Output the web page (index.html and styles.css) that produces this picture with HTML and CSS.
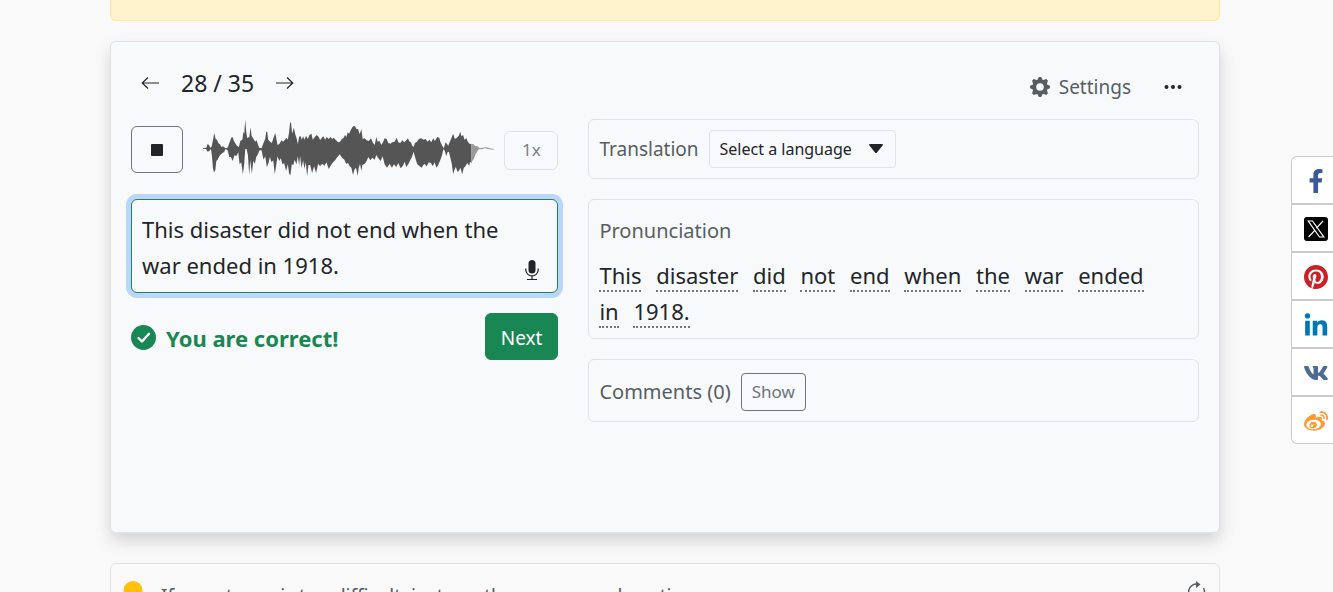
FILE: index.html
```html
<!DOCTYPE html>
<html lang="en">
<head>
<meta charset="utf-8">
<title>Dictation exercise</title>
<link rel="stylesheet" href="styles.css">
</head>
<body>
<main class="page">
  <div class="notice"></div>

  <section class="card">
    <header class="card-head">
      <nav class="pager">
        <button class="plain" type="button" aria-label="Previous"><svg class="arrow" viewBox="0 0 18 14"><path d="M7 1.500 1.200 7 7 12.500M1.500 7H18"/></svg></button>
        <span class="count">28 / 35</span>
        <button class="plain" type="button" aria-label="Following"><svg class="arrow" viewBox="0 0 18 14"><path d="M11 1.500 16.800 7 11 12.500M16.500 7H0"/></svg></button>
      </nav>
      <div class="tools">
        <button class="plain settings" type="button">
          <svg class="gear" viewBox="0 0 20 20"><path fill-rule="evenodd" d="M8.800 0h2.400l1.100 2.600 1.300.5L16.200 2 18 3.800l-1.100 2.600.5 1.300L20 8.800v2.400l-2.600 1.100-.5 1.300L18 16.200 16.200 18l-2.600-1.100-1.300.5L11.200 20H8.800l-1.100-2.600-1.300-.5L3.800 18 2 16.200l1.100-2.600-.5-1.300L0 11.200V8.800l2.600-1.100.5-1.300L2 3.800 3.800 2l2.600 1.100 1.300-.5zM10 6.200a3.800 3.800 0 1 0 0 7.600 3.800 3.800 0 0 0 0-7.600z"/></svg>
          Settings
        </button>
        <button class="plain" type="button" aria-label="More"><svg class="dots" viewBox="0 0 18 6"><circle cx="2.500" cy="3" r="2"/><circle cx="9" cy="3" r="2"/><circle cx="15.500" cy="3" r="2"/></svg></button>
      </div>
    </header>

    <div class="columns">
      <div class="stack">
        <div class="audio">
          <button class="stop" type="button" aria-label="Stop"><span class="stop-mark"></span></button>
          <svg class="wave" viewBox="0 0 930 210" preserveAspectRatio="none">
            <path class="played" d="M24 99 L34 98 38 87 42 90 46 98 50 95 54 75 58 54 62 72 66 74 70 84 75 88 79 96 84 94 92 100 98 98 104 82 109 68 113 66 117 78 122 86 126 92 132 96 136 78 140 76 143 72 145 50 148 56 151 14 154 50 157 70 160 66 163 68 167 37 170 62 176 72 181 80 185 76 189 88 193 98 200 100 205 86 211 72 214 50 217 50 220 74 226 80 231 84 236 68 241 54 244 68 248 90 254 86 260 76 265 80 270 74 275 68 279 74 283 50 286 20 289 26 292 56 297 38 302 60 306 72 309 88 313 66 317 62 321 74 325 64 329 74 334 62 339 72 344 60 350 56 354 74 360 66 366 60 372 66 376 76 381 68 386 64 391 74 396 66 402 72 407 66 412 72 417 68 424 76 430 82 436 80 441 72 446 70 451 60 455 66 459 52 463 56 468 46 472 38 477 33 481 34 485 42 490 42 495 58 500 42 504 72 510 70 516 76 522 78 529 70 535 84 540 90 545 66 549 80 555 78 560 90 565 82 570 70 576 72 581 84 587 86 593 82 600 80 606 68 611 82 617 84 623 76 629 82 635 76 640 70 645 80 649 82 653 92 657 96 661 84 667 80 673 72 680 70 687 74 693 72 699 80 705 74 710 82 716 70 721 78 728 66 734 68 738 82 743 92 748 100 753 82 757 86 761 92 767 78 772 66 776 56 781 72 787 68 793 62 797 50 801 64 806 60 810 74 816 70 820 80 825 86 831 88 L831 144 827 140 824 152 818 144 813 154 808 158 803 178 798 158 793 168 789 170 784 156 780 164 776 178 772 148 767 126 763 110 759 112 755 124 751 108 747 102 742 122 737 136 731 150 726 158 720 142 715 154 709 144 703 142 696 154 689 146 681 158 674 152 668 148 662 128 657 110 652 126 647 136 641 148 635 156 630 140 625 152 618 160 611 144 605 156 598 148 592 158 585 146 577 158 570 148 564 124 558 138 551 130 545 120 540 134 533 128 527 136 521 126 514 142 508 148 503 150 500 168 496 146 492 160 489 182 484 158 479 164 475 180 470 158 465 154 460 144 454 146 449 134 442 128 435 118 428 126 421 136 415 142 409 150 402 162 395 142 389 152 382 146 376 154 370 146 364 174 358 154 352 174 346 150 341 150 337 184 333 142 329 162 325 136 320 160 316 122 313 152 309 124 305 148 299 134 296 150 291 148 287 180 283 176 279 148 274 168 268 144 263 148 258 130 253 138 248 124 243 158 240 178 235 136 230 142 225 126 221 144 216 156 211 124 206 134 200 106 194 106 189 118 184 126 180 146 175 138 171 176 166 136 163 180 159 120 155 102 151 102 148 146 144 178 139 142 134 148 130 112 124 124 119 120 113 138 108 126 103 126 98 106 92 102 88 110 83 114 78 118 73 124 68 134 64 138 61 166 57 172 54 160 51 124 48 102 43 108 38 110 33 102 24 101Z"/>
            <path class="rest" d="M831 86 L837 88 842 94 848 93 856 100 864 98 876 97 886 100 898 102 898 104 884 103 872 100 862 103 853 103 848 110 843 118 838 132 831 142Z"/>
          </svg>
          <button class="speed" type="button">1x</button>
        </div>

        <div class="answer">
          <textarea class="answer-box" aria-label="Your answer" rows="2" spellcheck="false">This disaster did not end when the war ended in 1918.</textarea>
          <button class="plain mic" type="button" aria-label="Speak"><svg class="mic-icon" viewBox="0 0 14 20"><rect class="solid" x="3.500" y="0" width="7" height="13.500" rx="3.500"/><path d="M.8 8.500v1.500a6.200 5.800 0 0 0 12.400 0V8.500M7 16v3.500M2 19.500h10"/></svg></button>
        </div>

        <div class="result">
          <p class="verdict"><svg class="check" viewBox="0 0 25 25"><circle cx="12.500" cy="12.500" r="12.500"/><path d="M7.500 13 11 16.500 18 8.800"/></svg>You are correct!</p>
          <button class="next" type="button">Next</button>
        </div>
      </div>

      <div class="stack">
        <div class="panel row">
          <label for="lang">Translation</label>
          <span class="select-wrap">
            <select class="select" id="lang"><option>Select a language</option></select>
            <svg class="caret" viewBox="0 0 14 9"><path d="M1 0h12q1.500.4.6 1.500L8 8.400q-1 1-2 0L.4 1.500Q-.5.4 1 0z"/></svg>
          </span>
        </div>
        <div class="panel pron">
          <h2 class="title">Pronunciation</h2>
          <p class="words"><span>This</span> <span>disaster</span> <span>did</span> <span>not</span> <span>end</span> <span>when</span> <span>the</span> <span>war</span> <span>ended</span> <span>in</span> <span>1918.</span></p>
        </div>
        <div class="panel row comments">
          <h2 class="title">Comments (0)</h2>
          <button class="show" type="button">Show</button>
        </div>
      </div>
    </div>
  </section>

  <section class="hint">
    <svg class="bulb" viewBox="0 0 20 30"><path d="M10 0a9.500 9.500 0 0 1 9.500 9.500c0 5-3.500 6-4.500 11.500H5C4 15.500.5 14.500.5 9.500A9.500 9.500 0 0 1 10 0zM6 23h8v4H6z"/></svg>
    <p class="hint-text">If a sentence is too difficult, just see the answer and continue.</p>
    <button class="plain" type="button" aria-label="Refresh"><svg class="refresh" viewBox="0 0 20 22"><path d="M13 3.500A8 8 0 1 0 18.500 11q0-2-1-4"/><path class="solid" d="M10 0l4.500 3.500L10 7z"/></svg></button>
  </section>
</main>

<aside class="share" aria-label="Share">
  <a href="#" aria-label="Facebook"><svg viewBox="0 0 320 512"><path fill="#3b5998" d="M279.140 288l14.220-92.660h-88.910v-60.130c0-25.350 12.420-50.060 52.240-50.060h40.420V6.260S260.430 0 225.360 0c-73.220 0-121.080 44.380-121.080 124.720v70.620H22.890V288h81.390v224h100.170V288z"/></svg></a>
  <a href="#" aria-label="X"><svg viewBox="0 0 24 24"><rect width="24" height="24" rx="3"/><path fill="none" stroke="#fff" stroke-width="1.200" d="M4.200 4h4.300l11.300 16h-4.300zM19 4l-6.600 7.200M11 13.200 4.600 20"/></svg></a>
  <a href="#" aria-label="Pinterest"><svg viewBox="0 8 496 496"><path fill="#cb2027" d="M496 256c0 137-111 248-248 248-25.600 0-50.200-3.900-73.400-11.100 10.100-16.500 25.200-43.500 30.800-65 3-11.600 15.400-59 15.400-59 8.100 15.400 31.700 28.500 56.800 28.500 74.800 0 128.700-68.800 128.700-154.300 0-81.900-66.900-143.200-152.900-143.200-107 0-163.900 71.800-163.900 150.100 0 36.400 19.400 81.700 50.300 96.100 4.700 2.200 7.200 1.200 8.300-3.300.8-3.400 5-20.300 6.900-28.100.6-2.500.3-4.700-1.700-7.100-10.100-12.500-18.300-35.300-18.300-56.600 0-54.700 41.400-107.600 112-107.600 60.900 0 103.600 41.500 103.600 100.900 0 67.100-33.900 113.600-78 113.600-24.300 0-42.600-20.100-36.700-44.800 7-29.500 20.500-61.300 20.500-82.600 0-19-10.200-34.900-31.400-34.900-24.900 0-44.900 25.700-44.900 60.200 0 22 7.400 36.800 7.400 36.800s-24.500 103.800-29 123.200c-5 21.400-3 51.600-.9 71.200C65.400 450.900 0 361.100 0 256 0 119 111 8 248 8s248 111 248 248z"/></svg></a>
  <a href="#" aria-label="LinkedIn"><svg viewBox="0 -4 448 480"><path fill="#0077b5" d="M100.280 448H7.400V148.900h92.880zM53.790 108.100C24.090 108.100 0 83.500 0 53.800a53.790 53.790 0 0 1 107.580 0c0 29.700-24.100 54.300-53.790 54.300zM447.900 448h-92.680V302.400c0-34.700-.7-79.200-48.290-79.200-48.290 0-55.690 37.700-55.690 76.700V448h-92.780V148.900h89.080v40.800h1.300c12.400-23.500 42.690-48.300 87.880-48.300 94 0 111.280 61.900 111.280 142.300V448z"/></svg></a>
  <a href="#" aria-label="VK"><svg viewBox="16 0 544 512"><path fill="#4c6c91" d="M545 117.700c3.700-12.500 0-21.700-17.800-21.700h-58.900c-15 0-21.900 7.900-25.600 16.700 0 0-30 73.100-72.400 120.500-13.700 13.700-20 18.100-27.500 18.100-3.700 0-9.400-4.400-9.400-16.900V117.700c0-15-4.200-21.700-16.600-21.700h-92.600c-9.400 0-15 7-15 13.500 0 14.200 21.200 17.500 23.400 57.500v86.800c0 19-3.400 22.500-10.900 22.500-20 0-68.600-73.400-97.400-157.400-5.800-16.300-11.500-22.900-26.600-22.900H38.800c-16.800 0-20.200 7.900-20.200 16.700 0 15.600 20 93.100 93.100 195.500C160.400 378.100 229 416 291.400 416c37.500 0 42.100-8.400 42.100-22.900 0-66.800-3.400-73.100 15.400-73.100 8.700 0 23.700 4.400 58.700 38.100 40 40 46.600 57.900 69 57.900h58.900c16.800 0 25.300-8.400 20.400-25-11.200-34.900-86.900-106.700-90.300-111.500-8.700-11.200-6.200-16.200 0-26.200.1-.1 72-101.300 79.400-135.600z"/></svg></a>
  <a href="#" aria-label="Weibo"><svg viewBox="0 -16 512 512"><path fill="#ff9933" d="M407 177.600c7.600-24-13.400-46.800-37.400-41.700-22 4.800-28.800-28.100-7.100-32.800 50.100-10.900 92.300 37.100 76.500 84.800-6.800 21.200-38.800 10.800-32-10.300zM214.800 446.700C108.500 446.700 0 395.300 0 310.400c0-44.300 28-95.400 76.300-143.700C176 67 279.500 65.800 249.900 161c-4 13.100 12.300 5.700 12.300 6 79.500-33.600 140.500-16.800 114 51.400-3.700 9.400 1.100 10.900 8.300 13.100 135.700 42.300 34.800 215.200-169.700 215.200zm143.700-146.300c-5.400-55.700-78.500-94-163.400-85.700-84.800 8.600-148.800 60.300-143.400 116s78.500 94 163.400 85.700c84.800-8.600 148.800-60.300 143.400-116zM347.900 35.100c-25.900 5.600-16.800 43.700 8.300 38.300 72.300-15.200 134.800 52.800 111.700 124-7.400 24.200 29.100 37 37.400 12 31.900-99.800-55.100-195.900-157.400-174.300zm-78.500 311c-17.100 38.800-66.800 60-109.100 46.300-40.800-13.100-58-53.400-40.300-89.700 17.700-35.400 63.100-55.400 103.400-45.100 42 10.800 63.100 50.200 46 88.500zm-86.300-30c-12.900-5.400-30 .3-38 12.900-8.300 12.900-4.300 28 8.600 34 13.100 6 30.800.3 39.100-12.900 8-13.100 3.700-28.300-9.700-34zm32.600-13.400c-5.100-1.700-11.400.6-14.300 5.400-2.900 5.100-1.400 10.600 3.700 12.900 5.100 2 11.700-.3 14.600-5.400 2.800-5.200 1.100-10.900-4-12.900z"/></svg></a>
</aside>
</body>
</html>
```

FILE: styles.css
```css
* { box-sizing: border-box; }

html { scrollbar-width: none; }

body {
  margin: 0;
  background: #f9f9f9;
  color: #212529;
  font: 19px/30px "Noto Sans", "Open Sans", sans-serif;
}

button, textarea, select { font: inherit; color: inherit; margin: 0; }
button { cursor: pointer; }
h2, p { margin: 0; font-size: inherit; font-weight: 400; }
svg { display: block; }

.plain { display: flex; align-items: center; padding: 0; border: 0; background: none; }

.page { padding: 0 113px 0 110px; }

.notice {
  height: 21px;
  border: 1px solid #ffe69c;
  border-top: 0;
  border-radius: 0 0 6px 6px;
  background: #fff3cd;
}

.card {
  min-height: 492px;
  margin: 20px 0 30px;
  padding: 20px;
  border: 1px solid #dee2e6;
  border-radius: 6px;
  background: #f8f9fb;
  box-shadow: 0 8px 16px rgba(0, 0, 0, .15);
}

.card-head { display: flex; justify-content: space-between; align-items: flex-start; height: 57px; }
.pager { display: flex; align-items: center; gap: 22px; height: 42px; padding-left: 10px; }
.count { font-size: 23px; }
.arrow { width: 18px; height: 14px; fill: none; stroke: #212529; stroke-width: 1.2; }
.tools { display: flex; align-items: center; gap: 33px; height: 49px; padding-right: 17px; }
.settings { gap: 9px; color: #565e64; }
.gear { width: 20px; height: 20px; fill: #565e64; }
.dots { width: 18px; height: 6px; fill: #212529; }

.columns { display: grid; grid-template-columns: 7fr 10fr; gap: 30px; align-items: start; }
.stack { display: flex; flex-direction: column; gap: 20px; min-width: 0; }

.audio { display: flex; align-items: center; height: 60px; }
.stop {
  display: flex;
  align-items: center;
  justify-content: center;
  width: 52px;
  height: 47px;
  padding: 1px 0 0;
  border: 1px solid #6c757d;
  border-radius: 6px;
  background: none;
}
.stop-mark { width: 12px; height: 12px; border-radius: 1px; background: #212529; }
.wave { flex: 1; min-width: 0; height: 70px; margin: 2px 0 0 12px; }
.played { fill: #555; }
.rest { fill: #999; }
.speed {
  width: 54px;
  height: 39px;
  margin-top: 2px;
  padding: 0;
  border: 1px solid #dee2e6;
  border-radius: 6px;
  background: none;
  color: #7b8086;
  font-size: 17px;
}

.answer { position: relative; }
.answer-box {
  display: block;
  width: 100%;
  height: 94px;
  padding: 11px 40px 9px 10px;
  border: 1px solid #198754;
  border-radius: 6px;
  outline: 0;
  background: #f8f9fb;
  box-shadow: 0 0 0 5px #bbd6fb;
  font-size: 22px;
  line-height: 36px;
  resize: none;
  overflow: hidden;
}
.mic { position: absolute; right: 19px; bottom: 13px; }
.mic-icon { width: 14px; height: 20px; fill: none; stroke: #212529; stroke-width: 1.2; }
.mic-icon .solid { fill: #212529; stroke: none; }

.result { display: flex; justify-content: space-between; align-items: center; }
.verdict { display: flex; align-items: center; gap: 10px; padding-top: 2px; color: #198754; font-size: 22px; font-weight: 700; }
.check { width: 25px; height: 25px; fill: #198754; }
.check path { fill: none; stroke: #fff; stroke-width: 2.4; stroke-linecap: round; stroke-linejoin: round; }
.next {
  height: 47px;
  padding: 2px 15px 0;
  border: 1px solid #198754;
  border-radius: 6px;
  background: #198754;
  color: #fff;
}

.panel { padding: 10px; border: 1px solid #dee2e6; border-radius: 6px; color: #565e64; }
.row { display: flex; align-items: center; gap: 10px; }
.title { font-size: 20px; }
.comments { height: 63px; padding: 12px 10px 10px; }

.select-wrap { position: relative; }
.select {
  display: block;
  height: 38px;
  padding: 0 42px 0 10px;
  border: 1px solid #dee2e6;
  border-radius: 4px;
  appearance: none;
  background: none;
  color: #212529;
  font-size: 16px;
}
.caret { position: absolute; top: 14px; right: 13px; width: 14px; height: 9px; fill: #212529; pointer-events: none; }

.pron { display: flex; flex-direction: column; gap: 11px; padding: 16px 10px 9px; }
.words { padding-right: 30px; color: #212529; font-size: 22px; line-height: 36px; }
.words span { margin-right: 9px; border-bottom: 2px dotted #777; }

.show {
  height: 38px;
  padding: 0 10px;
  border: 1px solid #6c757d;
  border-radius: 4px;
  background: none;
  color: #6c757d;
  font-size: 17px;
}

.hint {
  display: flex;
  gap: 18px;
  align-items: flex-start;
  padding: 17px 13px 17px 12px;
  border: 1px solid #dee2e6;
  border-radius: 6px;
  color: #565e64;
}
.bulb { width: 20px; height: 30px; fill: #ffc107; }
.hint-text { flex: 1; }
.refresh { width: 20px; height: 22px; fill: none; stroke: #565e64; stroke-width: 1.5; }
.refresh .solid { fill: #565e64; stroke: none; }

.share { position: fixed; top: 156px; right: 0; display: flex; flex-direction: column; }
.share a {
  display: flex;
  height: 48px;
  padding: 12px 5px 10px 12px;
  border: 1px solid #ccc;
  border-right: 0;
  background: #fff;
}
.share a:first-child { border-top-left-radius: 6px; }
.share a:last-child { border-bottom-left-radius: 6px; }
.share svg { width: 24px; height: 24px; }
```
